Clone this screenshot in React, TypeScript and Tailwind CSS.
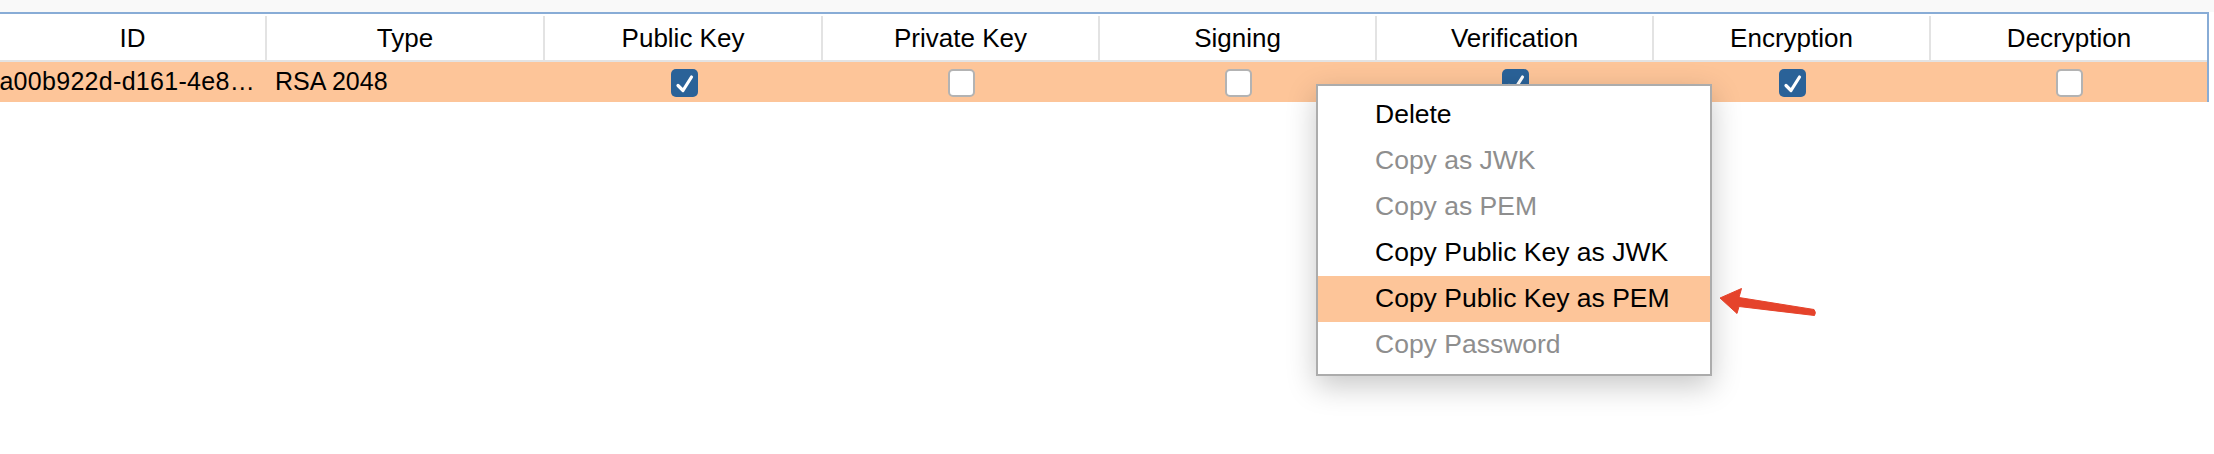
import { ReactNode } from 'react'

interface Column {
  label: string
  width: string
}

const columns: Column[] = [
  { label: 'ID', width: 'w-[267px]' },
  { label: 'Type', width: 'w-[278px]' },
  { label: 'Public Key', width: 'w-[278px]' },
  { label: 'Private Key', width: 'w-[277px]' },
  { label: 'Signing', width: 'w-[277px]' },
  { label: 'Verification', width: 'w-[277px]' },
  { label: 'Encryption', width: 'w-[277px]' },
  { label: 'Decryption', width: 'w-[276px]' }
]

const flags = [true, false, false, true, true, false]

interface MenuItem {
  label: string
  disabled?: boolean
  active?: boolean
}

const menuItems: MenuItem[] = [
  { label: 'Delete' },
  { label: 'Copy as JWK', disabled: true },
  { label: 'Copy as PEM', disabled: true },
  { label: 'Copy Public Key as JWK' },
  { label: 'Copy Public Key as PEM', active: true },
  { label: 'Copy Password', disabled: true }
]

function Checkbox({ checked }: { checked: boolean }) {
  if (checked) {
    return (
      <div className="w-[27px] h-[28px] rounded-[5px] bg-[#2a6298] flex items-center justify-center">
        <svg width="27" height="28" viewBox="0 0 27 28">
          <path d="M7 16.5 L12 21.5 L20.5 8" fill="none" stroke="#fff" strokeWidth="3.2" strokeLinecap="round" strokeLinejoin="round" />
        </svg>
      </div>
    )
  }
  return <div className="w-[27px] h-[28px] rounded-[5px] bg-white border-2 border-[#b3b3b3]" />
}

function Cell({ width, children, className = '' }: { width: string; children?: ReactNode; className?: string }) {
  return <div className={`${width} shrink-0 h-full flex items-center ${className}`}>{children}</div>
}

export default function App() {
  return (
    <div className="relative w-[2214px] h-[454px] overflow-hidden bg-white text-black font-['Liberation_Sans',Arial,sans-serif]">
      <div className="h-[12px] bg-[#f9f9f9]" />

      <div className="w-[2209px] border-t-2 border-r-2 border-[#88acd6]">
        {/* header */}
        <div className="flex h-[48px] border-b-2 border-[#e3e3e3] text-[26px] pt-[2px]">
          {columns.map((col, i) => (
            <Cell
              key={col.label}
              width={col.width}
              className={`justify-center ${i < columns.length - 1 ? 'border-r-2 border-[#e3e3e3]' : ''}`}
            >
              {col.label}
            </Cell>
          ))}
        </div>

        {/* selected row */}
        <div className="flex h-[40px] bg-[#fdc599] text-[25px]">
          <Cell width="w-[267px]" className="justify-end pr-[12px] overflow-hidden whitespace-nowrap">
            <span className="tracking-[0.3px]">a00b922d-d161-4e8…</span>
          </Cell>
          <Cell width="w-[278px]" className="pl-[8px]">
            RSA 2048
          </Cell>
          {flags.map((f, i) => (
            <Cell key={i} width={columns[i + 2].width} className="justify-center pt-[1px]">
              <Checkbox checked={f} />
            </Cell>
          ))}
        </div>
      </div>

      {/* context menu */}
      <div className="absolute left-[1316px] top-[84px] w-[396px] h-[292px] bg-white border-2 border-[#acacac] pt-[6px] shadow-[0_10px_28px_rgba(0,0,0,0.22)]">
        {menuItems.map(item => (
          <div
            key={item.label}
            className={`h-[46px] flex items-center pl-[57px] text-[26.5px] whitespace-nowrap ${
              item.active ? 'bg-[#fdc599]' : ''
            } ${item.disabled ? 'text-[#8e8e8e]' : 'text-black'}`}
          >
            {item.label}
          </div>
        ))}
      </div>

      {/* annotation arrow */}
      <svg className="absolute left-[1710px] top-[280px]" width="120" height="45" viewBox="0 0 120 45">
        <path
          d="M10 18 L31.5 8.5 L29 17.5 L104 29.5 Q106.5 32.5 104.5 35.5 L29 26.5 L27 33.5 Z"
          fill="#e5432b"
          stroke="#e5432b"
          strokeWidth="1"
          strokeLinejoin="round"
        />
      </svg>
    </div>
  )
}
